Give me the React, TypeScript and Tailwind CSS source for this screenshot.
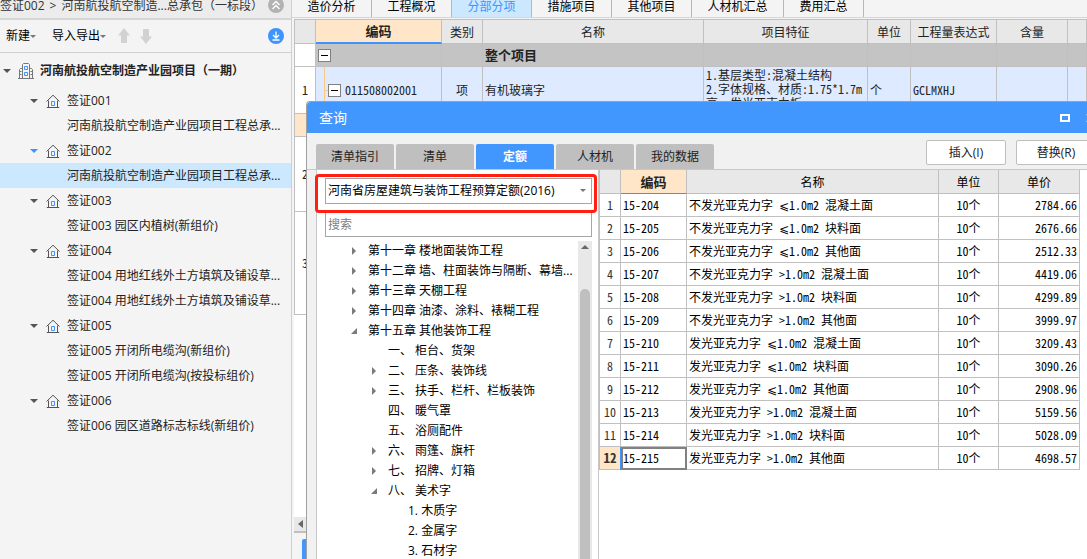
import { Fragment } from 'react';
import clsx from 'clsx';

const projects = [
  { title: '签证001', items: ['河南航投航空制造产业园项目工程总承...'] },
  { title: '签证002', items: ['河南航投航空制造产业园项目工程总承...'], active: true },
  { title: '签证003', items: ['签证003 园区内植树(新组价)'] },
  { title: '签证004', items: ['签证004 用地红线外土方填筑及铺设草...', '签证004 用地红线外土方填筑及铺设草...'] },
  { title: '签证005', items: ['签证005 开闭所电缆沟(新组价)', '签证005 开闭所电缆沟(按投标组价)'] },
  { title: '签证006', items: ['签证006 园区道路标志标线(新组价)'] },
];

const mainTabs = ['造价分析', '工程概况', '分部分项', '措施项目', '其他项目', '人材机汇总', '费用汇总'];

const queryTabs = ['清单指引', '清单', '定额', '人材机', '我的数据'];

const chapters = [
  { text: '第十一章 楼地面装饰工程', level: 0, state: 'closed' },
  { text: '第十二章 墙、柱面装饰与隔断、幕墙...', level: 0, state: 'closed' },
  { text: '第十三章 天棚工程', level: 0, state: 'closed' },
  { text: '第十四章 油漆、涂料、裱糊工程', level: 0, state: 'closed' },
  { text: '第十五章 其他装饰工程', level: 0, state: 'open' },
  { text: '一、 柜台、货架', level: 1, state: 'leaf' },
  { text: '二、 压条、装饰线', level: 1, state: 'closed' },
  { text: '三、 扶手、栏杆、栏板装饰', level: 1, state: 'closed' },
  { text: '四、 暖气罩', level: 1, state: 'leaf' },
  { text: '五、 浴厕配件', level: 1, state: 'leaf' },
  { text: '六、 雨篷、旗杆', level: 1, state: 'closed' },
  { text: '七、 招牌、灯箱', level: 1, state: 'closed' },
  { text: '八、 美术字', level: 1, state: 'open' },
  { text: '1. 木质字', level: 2, state: 'leaf' },
  { text: '2. 金属字', level: 2, state: 'leaf' },
  { text: '3. 石材字', level: 2, state: 'leaf' },
];

const quotas = [
  ['15-204', '不发光亚克力字 ⩽1.0m2 混凝土面', '2784.66'],
  ['15-205', '不发光亚克力字 ⩽1.0m2 块料面', '2676.66'],
  ['15-206', '不发光亚克力字 ⩽1.0m2 其他面', '2512.33'],
  ['15-207', '不发光亚克力字 >1.0m2 混凝土面', '4419.06'],
  ['15-208', '不发光亚克力字 >1.0m2 块料面', '4299.89'],
  ['15-209', '不发光亚克力字 >1.0m2 其他面', '3999.97'],
  ['15-210', '发光亚克力字 ⩽1.0m2 混凝土面', '3209.43'],
  ['15-211', '发光亚克力字 ⩽1.0m2 块料面', '3090.26'],
  ['15-212', '发光亚克力字 ⩽1.0m2 其他面', '2908.96'],
  ['15-213', '发光亚克力字 >1.0m2 混凝土面', '5159.56'],
  ['15-214', '发光亚克力字 >1.0m2 块料面', '5028.09'],
  ['15-215', '发光亚克力字 >1.0m2 其他面', '4698.57'],
];

const Caret = ({ small, className }: { small?: boolean; className?: string }) => (
  <svg viewBox="0 0 8 4" className={clsx('shrink-0', small ? 'h-[3px] w-1.5' : 'h-1 w-2', className)} fill="currentColor">
    <path d="M0 0h8L4 4z" />
  </svg>
);

const HouseIcon = () => (
  <svg viewBox="0 0 14 14" className="h-3.5 w-3.5 shrink-0" fill="none">
    <path d="M.5 7.5 7 1.2l6.500 6.300M2.500 6.500v7M11.500 6.500v7M.8 13.500h12.400" stroke="#555" />
    <path d="M5.500 7.500h3v4h-3z" stroke="#3d94ff" />
  </svg>
);

const BuildingIcon = () => (
  <svg viewBox="0 0 16 16" className="h-4 w-4 shrink-0" fill="none">
    <path d="M4.500 15V1.500l1-1h5l1 1V15M4.500 5.500h-2l-1 1V15M11.500 5.500h2l1 1V15M0 15.500h16M1.500 8.500h2M1.500 11.500h2M12.500 8.500h2M12.500 11.500h2" stroke="#777" />
    <path d="M6.500 3.500h3v3h-3zM6.500 9.500h3v3h-3z" stroke="#3d94ff" />
  </svg>
);

const MoveArrow = ({ down }: { down?: boolean }) => (
  <svg viewBox="0 0 12 16" className={clsx('h-4 w-3', down && 'rotate-180')} fill="#d2d2d2">
    <path d="M6 0 12 7.500H9V15H3V7.500H0z" />
  </svg>
);

const TreeMarker = ({ state }: { state: string }) => (
  <svg viewBox="0 0 8 8" className="h-2 w-2 shrink-0" fill="#7a7a7a">
    {state === 'closed' && <path d="M2 0l4 4-4 4z" />}
    {state === 'open' && <path d="M7 1v6H1z" />}
  </svg>
);

const MinusBox = () => (
  <button aria-label="折叠" className="flex h-[13px] w-[13px] shrink-0 items-center justify-center border border-[#808080] bg-white">
    <span className="h-px w-[7px] bg-black" />
  </button>
);

const Sidebar = () => (
  <aside className="flex w-[292px] shrink-0 flex-col border-r border-[#d0d0d0] bg-[#f4f4f4]">
    <div className="flex h-5 shrink-0 items-start justify-between border-b-2 border-[#d6d6d6] bg-[#ececec] pr-[7px] leading-3">
      <div className="flex gap-[5px] whitespace-nowrap text-[#333]">
        <span>签证002</span>
        <span>&gt;</span>
        <span>河南航投航空制造...总承包（一标段）</span>
      </div>
      <button aria-label="收起" className="-mt-[3px] flex h-4 w-4 shrink-0 items-center justify-center rounded-full bg-[#b2b2b2]">
        <svg viewBox="0 0 10 10" className="h-2.5 w-2.5" fill="none" stroke="#fff" strokeWidth="1.300">
          <path d="M1.500 5 5 1.500 8.500 5M1.500 9 5 5.500 8.500 9" />
        </svg>
      </button>
    </div>
    <div className="flex h-[33px] shrink-0 items-center border-b border-[#d0d0d0] pr-[7px] pl-1.5 text-black">
      <button className="flex items-center">新建<Caret small className="text-[#777]" /></button>
      <button className="ml-4 flex items-center">导入导出<Caret small className="text-[#777]" /></button>
      <button aria-label="上移" className="ml-3"><MoveArrow /></button>
      <button aria-label="下移" className="ml-2.5"><MoveArrow down /></button>
      <button aria-label="下载" className="ml-auto flex h-4 w-4 items-center justify-center rounded-full bg-[#3d94ff]">
        <svg viewBox="0 0 10 10" className="h-2.5 w-2.5" fill="none" stroke="#fff" strokeWidth="1.300">
          <path d="M5 .5v6M2 4l3 3 3-3M1.500 9h7" />
        </svg>
      </button>
    </div>
    <div className="flex h-[35px] shrink-0 items-center gap-1.5 pl-[3px] font-bold whitespace-nowrap">
      <Caret className="mr-px text-[#555]" />
      <BuildingIcon />
      河南航投航空制造产业园项目（一期）
    </div>
    <ul>
      {projects.map((project) => (
        <Fragment key={project.title}>
          <li className="flex h-[25px] items-center pl-[30px]">
            <Caret className={project.active ? 'text-[#3d94ff]' : 'text-[#555]'} />
            <span className="mr-[7px] ml-2"><HouseIcon /></span>
            {project.title}
          </li>
          {project.items.map((item, idx) => (
            <li key={idx} className={clsx('flex h-[25px] items-center pl-[67px] whitespace-nowrap', project.active && 'bg-[#cce8ff]')}>
              {item}
            </li>
          ))}
        </Fragment>
      ))}
    </ul>
  </aside>
);

const th = 'border-r border-b border-[#c0c0c0] bg-[#e8e8e8] font-normal';
const td = 'border-r border-b border-[#c0c0c0] px-0.5';
const mono = "font-['Noto_Sans_Mono_CJK_SC','Noto_Sans_CJK_SC','DejaVu_Sans',monospace]";

const ItemTable = () => (
  <table className={clsx('w-full table-fixed border-separate border-spacing-0 border-t border-l border-[#c0c0c0] leading-[14px]', mono)}>
    <colgroup>
      <col className="w-[21px]" />
      <col className="w-[126px]" />
      <col className="w-[41px]" />
      <col className="w-[221px]" />
      <col className="w-[164px]" />
      <col className="w-[43px]" />
      <col className="w-[86px]" />
      <col className="w-[71px]" />
      <col />
    </colgroup>
    <thead>
      <tr className="h-6">
        <th className={th} />
        <th className="border-r border-b-2 border-r-[#c0c0c0] border-b-[#3d94ff] bg-[#ffe6c8] text-[13px]">编码</th>
        <th className={th}>类别</th>
        <th className={th}>名称</th>
        <th className={th}>项目特征</th>
        <th className={th}>单位</th>
        <th className={th}>工程量表达式</th>
        <th className={th}>含量</th>
        <th className={th} />
      </tr>
    </thead>
    <tbody>
      <tr className="h-[23px] bg-[#c4c4c4]">
        <td className={clsx(td, 'bg-white')} />
        <td className={td}><MinusBox /></td>
        <td className={td} />
        <td className={clsx(td, 'text-[13px] font-bold')}>整个项目</td>
        <td className={td} />
        <td className={td} />
        <td className={td} />
        <td className={td} />
        <td className={td} />
      </tr>
      <tr className="h-[47px] bg-[#deeaff]">
        <td className={clsx(td, 'bg-white text-center')}>1</td>
        <td className="border-r border-b border-[#c0c0c0] p-0">
          <div className="flex h-[46px] items-center">
            <span className="ml-2 h-full w-px bg-[#ffc880]" />
            <span className="h-px w-[3px] bg-[#ffc880]" />
            <MinusBox />
            <span className="ml-1">011508002001</span>
          </div>
        </td>
        <td className={clsx(td, 'text-center')}>项</td>
        <td className={td}>有机玻璃字</td>
        <td className="border-r border-b border-[#c0c0c0] p-0">
          <div className="h-[46px] overflow-hidden pt-px pl-0.5 whitespace-nowrap">
            1.基层类型:混凝土结构<br />2.字体规格、材质:1.75*1.7m<br />高、发光亚克力板
          </div>
        </td>
        <td className={td}>个</td>
        <td className={td}>GCLMXHJ</td>
        <td className={td} />
        <td className={td} />
      </tr>
      <tr className="h-[23px]">
        <td className={clsx(td, 'bg-[#ffe6c8]')} />
        <td className={td} colSpan={8} />
      </tr>
      <tr className="h-[75px]">
        <td className={clsx(td, 'text-center')}>2</td>
        <td className={td} colSpan={8} />
      </tr>
      <tr className="h-[103px]">
        <td className={clsx(td, 'text-center')}>3</td>
        <td className={td} colSpan={8} />
      </tr>
    </tbody>
  </table>
);

const QuotaTable = () => (
  <table className={clsx('w-[481px] table-fixed border-separate border-spacing-0 self-start border-l border-[#c0c0c0] leading-[14px] text-black', mono)}>
    <colgroup>
      <col className="w-[21px]" />
      <col className="w-[66px]" />
      <col className="w-[252px]" />
      <col className="w-[60px]" />
      <col className="w-[81px]" />
    </colgroup>
    <thead>
      <tr className="h-6">
        <th className={th} />
        <th className="border-r border-b border-r-[#c0c0c0] border-b-[#3d94ff] bg-[#ffe6c8] text-[13px] text-[#222]">编码</th>
        <th className={th}>名称</th>
        <th className={th}>单位</th>
        <th className={th}>单价</th>
      </tr>
    </thead>
    <tbody>
      {quotas.map(([code, name, price], idx) => {
        const selected = idx === quotas.length - 1;
        return (
          <tr key={code} className="h-[23px]">
            <td className={clsx('border-r border-b border-[#c0c0c0] p-0 text-center text-[#333]', selected && 'bg-[#ffe6c8] text-[13px] font-bold')}>
              {idx + 1}
            </td>
            <td className={clsx(td, selected && 'shadow-[-1px_0_0_#3d94ff] outline-2 -outline-offset-2 outline-[#808080]')}>{code}</td>
            <td className={clsx(td, 'whitespace-nowrap')}>{name}</td>
            <td className={clsx(td, 'text-center')}>10个</td>
            <td className={clsx(td, 'text-right')}>{price}</td>
          </tr>
        );
      })}
    </tbody>
  </table>
);

const QueryDialog = () => (
  <section className="absolute top-[101px] -right-[17px] bottom-0 left-3.5 flex flex-col rounded-tl border-t border-l border-[#a0a0a0] bg-[#f1f1f1]">
    <header className="flex h-[31px] shrink-0 items-center justify-between rounded-tl bg-[#4297ff] pr-2 pl-3 text-[14px] text-white">
      <h2>查询</h2>
      <div className="flex gap-4">
        <button aria-label="最大化" className="h-2 w-2.5 border-2 border-white" />
        <button aria-label="关闭">
          <svg viewBox="0 0 10 8" className="h-2 w-2.5" stroke="#fff" strokeWidth="2">
            <path d="M1 0l8 8M9 0L1 8" />
          </svg>
        </button>
      </div>
    </header>
    <div className="flex h-[37px] shrink-0 items-end justify-between border-b border-[#c8c8c8] pr-2 pl-[9px]">
      <nav className="flex gap-0.5">
        {queryTabs.map((tab) => (
          <button
            key={tab}
            className={clsx('h-[25px] w-[78px] rounded-t-xs', tab === '定额' ? 'bg-[#4297ff] font-bold text-white' : 'bg-[#bfbfbf] text-[#222]')}
          >
            {tab}
          </button>
        ))}
      </nav>
      <div className="mb-1 flex gap-2.5">
        <button className="h-[25px] w-20 rounded-xs border border-[#bfbfbf] bg-white">插入(I)</button>
        <button className="h-[25px] w-20 rounded-xs border border-[#bfbfbf] bg-white">替换(R)</button>
      </div>
    </div>
    <div className="ml-[9px] flex min-h-0 flex-1 border-l border-[#c8c8c8] bg-white">
      <div className="relative flex w-[282px] shrink-0 flex-col border-r border-[#c8c8c8] pr-[6px] pl-2 text-black">
        <div className="relative mt-2 shrink-0">
          <select aria-label="定额库" className="block h-[26px] w-full appearance-none border border-[#a6a6a6] bg-white pl-0.5">
            <option>河南省房屋建筑与装饰工程预算定额(2016)</option>
          </select>
          <Caret small className="pointer-events-none absolute top-[11px] right-1.5 text-[#777]" />
        </div>
        <input
          aria-label="搜索"
          placeholder="搜索"
          className="mt-2 h-[25px] w-full shrink-0 border border-[#a6a6a6] pl-0.5 placeholder:text-[#808080]"
        />
        <div className="absolute top-1 right-px -left-0.5 h-[39px] rounded border-3 border-[#ff2010]" />
        <div className="mt-1 flex min-h-0 flex-1">
          <ul className="min-w-0 flex-1 overflow-hidden">
            {chapters.map((chapter) => (
              <li
                key={chapter.text}
                className={clsx(
                  'flex h-5 items-center gap-2.5 whitespace-nowrap',
                  chapter.level === 0 && 'pl-[25px]',
                  chapter.level === 1 && 'pl-[45px]',
                  chapter.level === 2 && 'pl-[65px]',
                )}
              >
                <TreeMarker state={chapter.state} />
                {chapter.text}
              </li>
            ))}
          </ul>
          <div className="flex w-3.5 shrink-0 flex-col items-center bg-[#e8e8e8] pt-1">
            <Caret className="rotate-180 text-[#666]" />
            <div className="mt-10 w-2.5 flex-1 rounded-t-full bg-[#bfbfbf]" />
          </div>
        </div>
      </div>
      <QuotaTable />
    </div>
  </section>
);

const App = () => (
  <div className="flex h-screen overflow-hidden bg-[#f4f4f4] font-['Open_Sans','Noto_Sans_CJK_SC',sans-serif] text-[12px] text-[#222]">
    <Sidebar />
    <main className="relative flex min-w-0 flex-1 flex-col">
      <nav className="flex h-[18px] shrink-0 border-b border-[#d6d6d6] text-black">
        {mainTabs.map((tab) => (
          <button
            key={tab}
            className={clsx(
              'flex h-[17px] items-start justify-center border-r border-[#b8b8b8] leading-[14px]',
              tab === '人材机汇总' ? 'w-[92px]' : 'w-20',
              tab === '分部分项' && 'bg-[#cce8ff] text-[#3d94ff]',
            )}
          >
            {tab}
          </button>
        ))}
      </nav>
      <div className="mt-px ml-0.5 flex min-h-0 flex-1 flex-col">
        <div className="min-h-0 flex-1 overflow-hidden bg-white"><ItemTable /></div>
        <div className="flex h-4 shrink-0 items-center border-b-2 border-[#c0c0c0] bg-[#e8e8e8] pl-1">
          <svg viewBox="0 0 5 8" className="h-2 w-[5px]" fill="#666"><path d="M5 0v8L0 4z" /></svg>
        </div>
        <div className="h-[26px] shrink-0 pt-1.5 pl-2">
          <div className="h-5 rounded-tl-xs bg-[#4297ff]" />
        </div>
      </div>
      <QueryDialog />
    </main>
  </div>
);

export default App;
